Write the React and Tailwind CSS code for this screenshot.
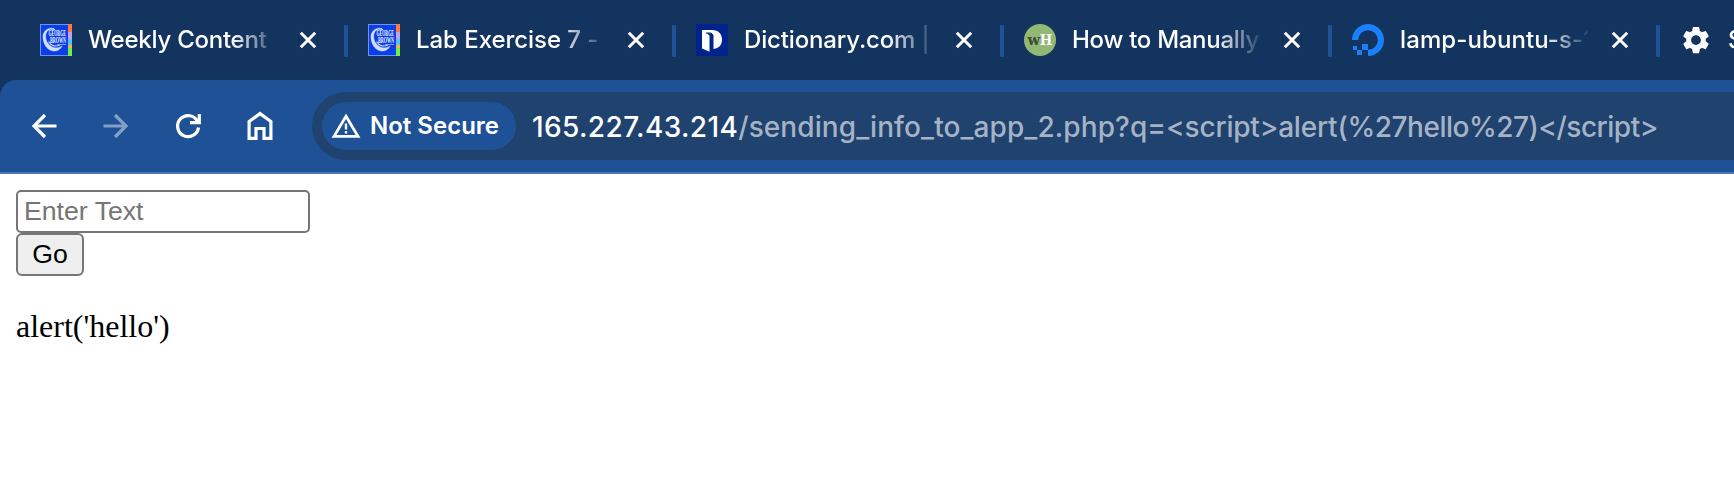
const INTER = "font-['Inter','Liberation_Sans',sans-serif]";

function GeorgeBrownIcon() {
  return (
    <svg viewBox="0 0 32 32" className="size-8 shrink-0">
      <rect width="32" height="32" fill="#6f93f3" />
      <rect x="1" y="1" width="27" height="30" fill="#0a3fe6" />
      <rect x="28" width="4" height="8" fill="#ff7a45" />
      <rect x="28" y="8" width="4" height="7" fill="#b9a4ea" />
      <rect x="28" y="15" width="4" height="6" fill="#4fc4fb" />
      <rect x="28" y="21" width="4" height="3" fill="#ffb13d" />
      <rect x="28" y="24" width="4" height="8" fill="#6df04c" />
      <path d="M14 4.500C7 3 2.600 8 3 13.500C3.500 22 9 27.500 15 27C18.500 26.700 21 24.500 22 22C18 25.200 12 24.300 8.500 20C5 16 4.500 9.500 8 6.500C10 5 12 5 15 6Z" fill="#d3ddff" stroke="#dde6ff" strokeWidth=".5" />
      <path d="M8.500 17.500C11 22 16 23 20 21" fill="none" stroke="#c0cfff" strokeWidth="1.200" />
      <text x="8.500" y="12.300" fill="#eef2ff" fontSize="7.500" fontFamily="Liberation Serif, serif" fontWeight="700" textLength="17.500" lengthAdjust="spacingAndGlyphs">GEORGE</text>
      <text x="10" y="18.700" fill="#eef2ff" fontSize="7.500" fontFamily="Liberation Serif, serif" fontWeight="700" textLength="16" lengthAdjust="spacingAndGlyphs">BROWN</text>
      <path d="M17 20.500H26" stroke="#7f9df8" strokeWidth="1" />
    </svg>
  );
}

function DictionaryIcon() {
  return (
    <svg viewBox="0 0 32 32" className="size-8 shrink-0">
      <rect width="32" height="32" fill="#00248b" />
      <path d="M6 6H16C22.500 6 26 10 26 15.500C26 21.500 22 25 17 25V11L15 9.300H10.500L13.500 11.500V27.800L6 24.500Z" fill="#fff" />
      <path d="M10 9H15L17 11V25" fill="none" stroke="#00248b" strokeWidth="1" />
    </svg>
  );
}

function WikiHowIcon() {
  return (
    <svg viewBox="0 0 32 32" className="size-8 shrink-0">
      <circle cx="16" cy="16" r="16" fill="#93b874" />
      <text x="3.500" y="21" fill="#3d4a34" fontSize="15" fontFamily="DejaVu Serif, serif" fontWeight="700" textLength="12.500" lengthAdjust="spacingAndGlyphs">w</text>
      <text x="15.800" y="21" fill="#fff" fontSize="15" fontFamily="DejaVu Serif, serif" fontWeight="700" textLength="12.500" lengthAdjust="spacingAndGlyphs">H</text>
    </svg>
  );
}

function DigitalOceanIcon() {
  return (
    <svg viewBox="0 0 32 32" className="size-8 shrink-0" fill="#1a7ffa">
      <path d="M0 16A16 16 0 1 1 16 32V25.800A9.800 9.800 0 1 0 6.200 16Z" />
      <path d="M10 20H16V26H10ZM5 26H10V31H5ZM1 22H5V26H1Z" />
    </svg>
  );
}

function GearIcon() {
  return (
    <svg viewBox="0 0 32 32" className="size-8 shrink-0">
      <path transform="translate(-.3 -.2) scale(1.358)" fill="#fff" d="M19.140 12.940c.04-.3.06-.61.06-.94 0-.32-.02-.64-.07-.94l2.030-1.580c.18-.14.23-.41.12-.61l-1.920-3.320c-.12-.22-.37-.29-.59-.22l-2.390.96c-.5-.38-1.030-.7-1.620-.94l-.36-2.540c-.04-.24-.24-.41-.48-.41h-3.840c-.24 0-.43.17-.47.41l-.36 2.540c-.59.24-1.130.57-1.620.94l-2.390-.96c-.22-.08-.47 0-.59.22L2.740 8.870c-.12.21-.08.47.12.61l2.030 1.580c-.05.3-.09.63-.09.94s.02.64.07.94l-2.030 1.580c-.18.14-.23.41-.12.61l1.920 3.320c.12.22.37.29.59.22l2.390-.96c.5.38 1.030.7 1.620.94l.36 2.540c.05.24.24.41.48.41h3.840c.24 0 .44-.17.47-.41l.36-2.540c.59-.24 1.130-.56 1.620-.94l2.390.96c.22.08.47 0 .59-.22l1.920-3.320c.12-.22.07-.47-.12-.61l-2.010-1.580zM12 15.600c-1.980 0-3.600-1.620-3.600-3.600s1.620-3.600 3.600-3.600 3.600 1.620 3.600 3.600-1.620 3.600-3.600 3.600z" />
    </svg>
  );
}

const TABS = [
  { title: "Weekly Content", Icon: GeorgeBrownIcon, tracking: "tracking-[-0.25px]" },
  { title: "Lab Exercise 7 -", Icon: GeorgeBrownIcon, tracking: "tracking-[-0.05px]" },
  { title: "Dictionary.com |", Icon: DictionaryIcon, tracking: "tracking-[-0.15px]" },
  { title: "How to Manually", Icon: WikiHowIcon, tracking: "tracking-[-0.28px]" },
  { title: "lamp-ubuntu-s-1", Icon: DigitalOceanIcon, tracking: "tracking-[0.1px]" },
  { title: "Settings", Icon: GearIcon, tracking: "tracking-[0px]" },
];

function Tab({ title, Icon, tracking }) {
  return (
    <div className="flex h-20 w-[328px] shrink-0 items-center">
      <Icon />
      <div className={`ml-4 w-[188px] overflow-hidden text-[24px] leading-8 font-medium whitespace-nowrap text-white [mask-image:linear-gradient(to_right,#000_144px,transparent_192px)] ${tracking}`}>
        {title}
      </div>
      <svg viewBox="0 0 24 24" className="ml-5 size-6 shrink-0">
        <path d="M4.800 4.800L19.200 19.200M19.200 4.800L4.800 19.200" stroke="#fff" strokeWidth="3" />
      </svg>
      <div className="mt-0.5 ml-6 h-8 w-1 rounded-[1px] bg-[#1e5196]" />
    </div>
  );
}

function ToolbarIcons() {
  return (
    <div className="flex gap-8 text-white">
      <svg viewBox="0 0 40 40" className="size-10" fill="none" stroke="currentColor" strokeWidth="3.200">
        <path d="M32.500 20H10M21 9L10 20L21 31" />
      </svg>
      <svg viewBox="0 0 40 40" className="size-10 text-[#849fc6]" fill="none" stroke="currentColor" strokeWidth="3.200">
        <path d="M7.500 20H30M19 9L30 20L19 31" />
      </svg>
      <svg viewBox="0 0 40 40" className="size-10" fill="none" stroke="currentColor" strokeWidth="3.200">
        <path d="M30.500 21.500A10.500 10.500 0 1 1 29.500 15.500M31.300 8V16.600H22" />
      </svg>
      <svg viewBox="0 0 40 40" className="size-10" fill="none" stroke="currentColor" strokeWidth="3.200">
        <path d="M9.100 32.400V15.500L20 7.600L30.900 15.500V32.400H24V22.500H16V32.400Z" />
      </svg>
    </div>
  );
}

export default function App() {
  return (
    <div className={`h-[486px] w-full overflow-hidden bg-white ${INTER}`}>
      <div className="bg-[#13345f]">
        <div className="flex h-20 overflow-hidden pl-10">
          {TABS.map((tab) => (
            <Tab key={tab.title} {...tab} />
          ))}
        </div>
        <div className="flex h-[94px] items-center overflow-hidden rounded-tl-[16px] border-b-2 border-[#4a78b0] bg-[#1e5196] pl-6">
          <ToolbarIcons />
          <div className="ml-8 flex h-[68px] flex-1 items-center rounded-l-full bg-[#1f426f] pl-2.5">
            <div className="flex h-12 w-[194px] shrink-0 items-center rounded-full bg-[#1e5196] pl-[9px]">
              <svg viewBox="0 0 30 26" className="h-[26px] w-[30px]">
                <path d="M3 23.400L15 3.200L27 23.400Z" fill="none" stroke="#fff" strokeWidth="2.800" />
                <path d="M15 10.500V16.500M15 18V20.500" stroke="#fff" strokeWidth="2.400" />
              </svg>
              <span className="ml-[9px] text-[24px] leading-8 font-semibold whitespace-nowrap text-white">Not Secure</span>
            </div>
            <div className="ml-4 pt-px text-[28px] leading-9 font-medium whitespace-nowrap text-[#a5b3c5]">
              <span className="tracking-[0.38px] text-white">165.227.43.214</span>
              <span className="tracking-[0.09px]">/sending_info_to_app_2.php?q=</span>
              <span className="tracking-[-0.2px]">&lt;script&gt;alert(</span>
              <span className="tracking-[-0.5px]">%27hello%27)&lt;/script&gt;</span>
            </div>
          </div>
        </div>
      </div>
      <main className="flex flex-col items-start px-4 pt-4 text-black">
        <input
          type="text"
          placeholder="Enter Text"
          className="h-[43px] w-[294px] rounded-[5px] border-2 border-[#767676] bg-white px-[6px] font-['Liberation_Sans',sans-serif] text-[26.67px] leading-8 placeholder:text-[#757575]"
        />
        <button className="h-[43px] w-[68px] rounded-[6px] border-2 border-[#767676] bg-[#efefef] pb-[2px] font-['Liberation_Sans',sans-serif] text-[26.67px] leading-8">
          Go
        </button>
        <p className="mt-8 font-['Liberation_Serif',serif] text-[32px] leading-[37px]">alert('hello')</p>
      </main>
    </div>
  );
}
